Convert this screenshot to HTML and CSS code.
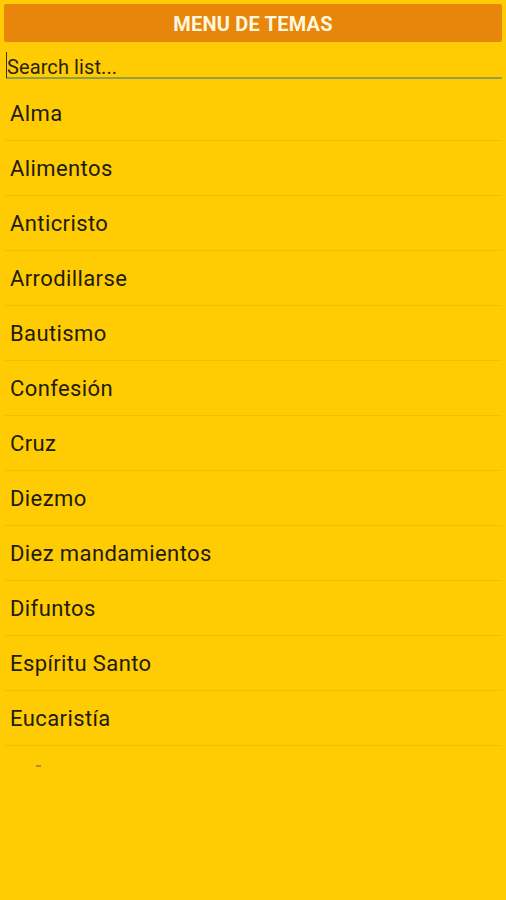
FILE: index.html
```html
<!DOCTYPE html>
<html lang="es">
<head>
    <meta charset="UTF-8">
    <meta name="viewport" content="width=device-width, initial-scale=1.0">
    <title>Menu de temas</title>
    <link rel="stylesheet" href="styles.css">
</head>
<body>
    <div class="screen">
        <div class="title-bar">MENU DE TEMAS</div>

        <div class="search">
            <span class="caret"></span>
            <span class="search-hint">Search list...</span>
        </div>

        <ul class="topic-list">
            <li>Alma</li>
            <li>Alimentos</li>
            <li>Anticristo</li>
            <li>Arrodillarse</li>
            <li>Bautismo</li>
            <li>Confesión</li>
            <li>Cruz</li>
            <li>Diezmo</li>
            <li>Diez mandamientos</li>
            <li>Difuntos</li>
            <li>Espíritu Santo</li>
            <li>Eucaristía</li>
        </ul>
        <div class="speck"></div>
    </div>
</body>
</html>
```

FILE: styles.css
```css
* {
    margin: 0;
    padding: 0;
    box-sizing: border-box;
}

body {
    font-family: Roboto, 'Noto Sans', sans-serif;
    background: #ffcb02;
    width: 506px;
    height: 900px;
    overflow: hidden;
}

.screen {
    padding: 4px 4px 0;
}

.title-bar {
    height: 38px;
    background: #e8850b;
    color: #fff6de;
    font-size: 20px;
    font-weight: 700;
    letter-spacing: 0.2px;
    text-align: center;
    line-height: 40px;
    border-radius: 2px;
}

.search {
    position: relative;
    margin: 8px 0 0 2px;
    height: 29px;
    border-bottom: 2px solid #8f9f4a;
    display: flex;
    align-items: center;
}

.caret {
    position: absolute;
    left: 0;
    top: 2px;
    width: 1px;
    height: 26px;
    background: #333;
}

.search-hint {
    font-size: 20px;
    color: #2a2410;
    padding-left: 1px;
    padding-top: 6px;
    letter-spacing: 0.1px;
}

.topic-list {
    list-style: none;
    margin-top: 7px;
}

.topic-list li {
    height: 55px;
    line-height: 56px;
    padding-left: 6px;
    font-size: 22px;
    letter-spacing: 0.4px;
    color: #221c0c;
    border-bottom: 1px solid #f0bf00;
}

.speck {
    width: 5px;
    height: 2px;
    margin: 19px 0 0 32px;
    background: #b08a30;
}
```
